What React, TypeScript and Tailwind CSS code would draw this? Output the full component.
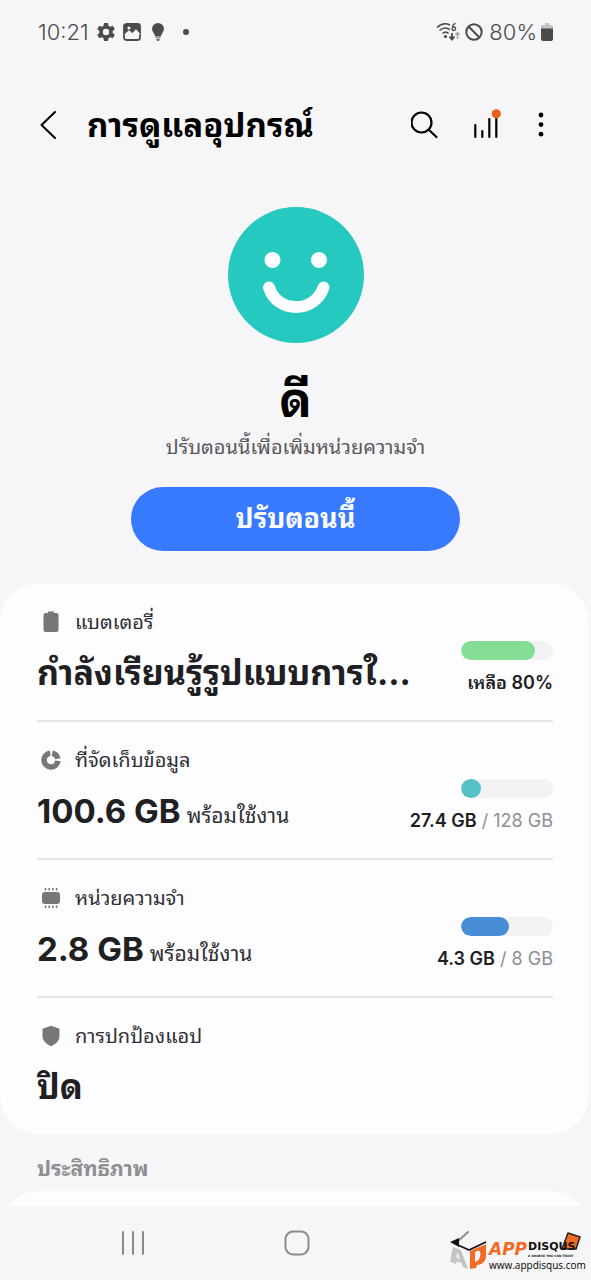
import type { ReactNode } from "react";

type RowProps = {
  icon: ReactNode;
  label: string;
  value: string;
  suffix?: string;
  meter?: { percent: number; color: string; name: string };
  detail?: ReactNode;
  last?: boolean;
};

function DeviceRow({ icon, label, value, suffix, meter, detail, last }: RowProps) {
  return (
    <li className={last ? "h-[136px]" : "h-[138px] border-b-2 border-[#e6e6e8]"}>
      <a href="#" className="flex h-full items-start justify-between">
        <div className="min-w-0 flex-1 pt-[22px]">
          <div className="flex h-8 items-center">
            <span className="flex w-[38px] items-center">{icon}</span>
            <span className="text-[20px] leading-8 text-[#303034]">{label}</span>
          </div>
          <p
            className={
              suffix
                ? "text-[33px] leading-[70px] font-bold whitespace-nowrap text-[#202022]"
                : "text-[34px] leading-[70px] font-bold whitespace-nowrap text-[#202022]"
            }
          >
            {value}
            {suffix && <span className="ml-1.5 text-[21px] font-normal text-[#303034]">{suffix}</span>}
          </p>
        </div>
        {meter && (
          <div className="flex shrink-0 flex-col items-end gap-2 pt-[57px]">
            <div
              role="meter"
              aria-label={meter.name}
              aria-valuenow={meter.percent}
              aria-valuemin={0}
              aria-valuemax={100}
              className="h-[19px] w-[92px] overflow-hidden rounded-full bg-[#f2f2f4]"
            >
              <div className={`h-full rounded-full ${meter.color}`} style={{ width: `${meter.percent}%` }} />
            </div>
            <p className="text-[18px] leading-[30px] whitespace-nowrap text-[#8e8e91]">{detail}</p>
          </div>
        )}
      </a>
    </li>
  );
}

function StatusBar() {
  return (
    <div className="flex h-16 items-center justify-between px-[38px] text-[22px] font-light text-[#4b4b4d]">
      <div className="flex items-center gap-2">
        <span>10:21</span>
        <svg width="18" height="18" viewBox="0 0 18 18" fill="currentColor">
          <path fillRule="evenodd" d="M7 0h4l.5 2.7 1.7 1 2.6-1 2 3.5-2.1 1.7v2.2l2.1 1.7-2 3.5-2.6-1-1.7 1L11 18H7l-.5-2.7-1.7-1-2.6 1-2-3.5 2.1-1.7V7.900L.2 6.200l2-3.500 2.600 1 1.700-1zM9 5.800a3.200 3.200 0 1 0 0 6.400a3.200 3.200 0 0 0 0-6.400z" />
        </svg>
        <svg width="18" height="18" viewBox="0 0 18 18" fill="none" stroke="currentColor">
          <rect x="1" y="1" width="16" height="16" rx="2.500" strokeWidth="1.800" />
          <path d="M1 1h16v10l-4-4.500-3.500 4L6 7.500 1 12z" fill="currentColor" stroke="none" />
          <path d="M2 12l4-3.700 3.500 3 3.500-4 3.500 4.200" stroke="#f6f6f8" strokeWidth="1.500" />
          <circle cx="6" cy="5" r="1.600" fill="#f6f6f8" stroke="none" />
        </svg>
        <svg width="18" height="18" viewBox="0 0 18 18" fill="currentColor">
          <path d="M9 0a6 6 0 0 0-6 6c0 2.600 2.400 4.200 3.200 7.400h5.600C12.600 10.200 15 8.600 15 6a6 6 0 0 0-6-6z" />
          <path d="M6.500 14.200h5v1.100h-5zM7 16h4l-1 2H8z" opacity=".8" />
        </svg>
        <span className="ml-2 size-1.5 rounded-full bg-[#4b4b4d]" />
      </div>
      <div className="flex items-center gap-1">
        <svg width="25" height="20" viewBox="0 0 25 20" fill="none" stroke="currentColor" strokeWidth="1.600">
          <path d="M1 5.500C5 1.500 10 1 14 3M3.500 8.500c3.500-3 7.500-3 10.500-.8M6.500 11.500c2-1.600 4.500-1.600 6 0" />
          <circle cx="9.500" cy="14.500" r=".8" fill="currentColor" />
          <path d="M19.500 1.500c-2 0-3 2-2.800 4.200M19.500 6a1.800 1.800 0 1 1-2.900-.6 1.800 1.800 0 0 1 2.900.6z" strokeWidth="1.400" />
          <path d="M16 11v6M13.500 14.500l2.500 3 2.500-3" strokeWidth="1.800" />
          <path d="M21.500 17v-6M19.500 13l2-2.500 2 2.500" stroke="#a4a4a7" strokeWidth="1.400" />
        </svg>
        <svg width="18" height="18" viewBox="0 0 18 18" fill="none" stroke="currentColor" strokeWidth="2">
          <circle cx="9" cy="9" r="7.700" />
          <path d="M3.500 3.500l11 11" />
        </svg>
        <span className="ml-0.5">80%</span>
        <svg width="12" height="18" viewBox="0 0 12 18">
          <path d="M4 0h4v2h2a2 2 0 0 1 2 2v3H0V4a2 2 0 0 1 2-2h2z" fill="#c2c2c5" />
          <path d="M0 5.500h12V16a2 2 0 0 1-2 2H2a2 2 0 0 1-2-2z" fill="#4b4b4d" />
        </svg>
      </div>
    </div>
  );
}

function Watermark() {
  return (
    <div className="pointer-events-none absolute right-1 bottom-[9px] flex h-[40px] w-[138px]">
      <svg className="absolute inset-0" width="138" height="40" viewBox="0 0 138 40">
        <path d="M4 16l8 3 7 19-5-2-1.500-4-5-1.500L7 33l-6-2.500zM8 21l-.5 6 3.500 1z" fill="#c4c4c6" fillRule="evenodd" />
        <path d="M21 20l9-4c5-1.500 7-3 7-3v12c0 6-5 9-9 9l-1 3-6 1zM26 21v10c6-1 7-11 3-11.500z" fill="#f36a25" fillRule="evenodd" />
        <path d="M1 11l9-4v9z" fill="#111" />
        <path d="M9 14l11 5 17-8" fill="none" stroke="#111" strokeWidth="1.600" />
        <path d="M119 2l12 4-4 12h-14z" fill="#f36a25" stroke="#222" strokeWidth="1.500" strokeLinejoin="round" />
      </svg>
      <div className="relative ml-10 flex flex-1 flex-col">
        <div className="flex h-7 items-end gap-px font-['DejaVu_Sans',sans-serif] font-bold">
          <span className="text-[17px] leading-5 text-[#f36a25] italic">APP</span>
          <span className="flex flex-col">
            <span className="text-[11px] leading-[12px] text-[#111]">DISQUS</span>
            <span className="text-[3px] leading-[6px] whitespace-nowrap text-[#111]">A SOURCE YOU CAN TRUST</span>
          </span>
        </div>
        <span className="font-['Open_Sans',sans-serif] text-[10px] leading-3 font-medium text-black">www.appdisqus.com</span>
      </div>
    </div>
  );
}

export default function App() {
  return (
    <div className="relative flex min-h-screen flex-col overflow-hidden bg-[#f6f6f8] font-[Inter,'Noto_Sans_Thai_Looped','Noto_Sans_Thai','Noto_Sans',sans-serif]">
      <StatusBar />
      <header className="flex h-[122px] items-center pr-[38px] pl-9">
        <button aria-label="ย้อนกลับ" className="flex w-[51px]">
          <svg width="24" height="30" viewBox="0 0 24 30" fill="none" stroke="#000" strokeWidth="2" strokeLinecap="round" strokeLinejoin="round">
            <path d="M19 2L5.500 15 19 28" />
          </svg>
        </button>
        <h1 className="flex-1 text-[33px] leading-[48px] font-bold text-black">การดูแลอุปกรณ์</h1>
        <div className="flex items-center gap-7">
          <button aria-label="ค้นหา">
            <svg width="28" height="28" viewBox="0 0 28 28" fill="none" stroke="#000" strokeWidth="2.200" strokeLinecap="round">
              <circle cx="10.500" cy="11.500" r="10" />
              <path d="M18 19l7.500 7" />
            </svg>
          </button>
          <button aria-label="สถิติ">
            <svg width="34" height="32" viewBox="0 0 34 32" fill="none" stroke="#000" strokeWidth="2.200" strokeLinecap="round">
              <path d="M8.300 16v12M15.300 22v6M22.300 10v18M29.300 8v20" />
              <circle cx="29.300" cy="4.800" r="4.600" fill="#ed5c1c" stroke="none" />
            </svg>
          </button>
          <button aria-label="ตัวเลือกเพิ่มเติม">
            <svg width="24" height="28" viewBox="0 0 24 28">
              <circle cx="12" cy="4" r="2.400" />
              <circle cx="12" cy="13.600" r="2.400" />
              <circle cx="12" cy="23.200" r="2.400" />
            </svg>
          </button>
        </div>
      </header>

      <main className="flex flex-1 flex-col">
        <section className="flex flex-col items-center pt-[21px] pb-[33px]">
          <svg width="136" height="136" viewBox="0 0 136 136">
            <circle cx="68" cy="68" r="68" fill="#25c9bf" />
            <circle cx="44.500" cy="53" r="8" fill="#fafcff" />
            <circle cx="91" cy="53" r="8" fill="#fafcff" />
            <path d="M41 80.500c8 26 46 26 54.500 0" fill="none" stroke="#fafcff" strokeWidth="12" strokeLinecap="round" />
          </svg>
          <h2 className="mt-[26px] text-[48px] leading-[62px] font-bold text-black">ดี</h2>
          <p className="text-[20px] leading-8 text-[#58585b]">ปรับตอนนี้เพื่อเพิ่มหน่วยความจำ</p>
          <button className="mt-6 h-[64px] w-[329px] rounded-full bg-[#387aff] text-[27px] font-bold text-[#fafcff]">
            ปรับตอนนี้
          </button>
        </section>

        <ul className="mr-0.5 rounded-[38px] bg-[#fdfdff] pr-9 pl-[37px]">
          <DeviceRow
            icon={
              <svg width="28" height="22" viewBox="0 0 28 22" fill="#77777a">
                <path d="M11 .500h6V2h2.500a2 2 0 0 1 2 2v15a2 2 0 0 1-2 2h-11a2 2 0 0 1-2-2V4a2 2 0 0 1 2-2H11z" />
              </svg>
            }
            label="แบตเตอรี่"
            value="กำลังเรียนรู้รูปแบบการใ..."
            meter={{ percent: 80, color: "bg-[#83dd92]", name: "แบตเตอรี่" }}
            detail={<span className="font-semibold text-[#202022]">เหลือ 80%</span>}
          />
          <DeviceRow
            icon={
              <svg width="28" height="22" viewBox="0 0 28 22" fill="none" stroke="#77777a" strokeWidth="5.500">
                <path d="M13.200 4.200a6.900 6.900 0 1 0 7.600 7.700" />
                <path d="M15.200 4.200a6.900 6.900 0 0 1 5.600 5.600" />
              </svg>
            }
            label="ที่จัดเก็บข้อมูล"
            value="100.6 GB"
            suffix="พร้อมใช้งาน"
            meter={{ percent: 22, color: "bg-[#53c1c6]", name: "ที่จัดเก็บข้อมูล" }}
            detail={<><span className="font-semibold text-[#202022]">27.4 GB</span> / 128 GB</>}
          />
          <DeviceRow
            icon={
              <svg width="28" height="22" viewBox="0 0 28 22" fill="#77777a">
                <rect x="5" y="5" width="18" height="12" rx="3" />
                <path d="M8.500 3.500V1M12.200 3.500V1M15.900 3.500V1M19.600 3.500V1M8.500 18.500V21M12.200 18.500V21M15.900 18.500V21M19.600 18.500V21" stroke="#77777a" strokeWidth="1.500" />
              </svg>
            }
            label="หน่วยความจำ"
            value="2.8 GB"
            suffix="พร้อมใช้งาน"
            meter={{ percent: 52, color: "bg-[#488dd6]", name: "หน่วยความจำ" }}
            detail={<><span className="font-semibold text-[#202022]">4.3 GB</span> / 8 GB</>}
          />
          <DeviceRow
            icon={
              <svg width="28" height="22" viewBox="0 0 28 22" fill="#77777a">
                <path d="M14 .800l8.500 3V11c0 4.500-3.500 8-8.500 10.200C9 19 5.500 15.500 5.500 11V3.800z" />
              </svg>
            }
            label="การปกป้องแอป"
            value="ปิด"
            last
          />
        </ul>

        <h3 className="pt-[21px] pr-9 pb-2 pl-[37px] text-[21px] leading-7 font-bold text-[#8e8e91]">ประสิทธิภาพ</h3>
        <div className="h-[15px] overflow-hidden">
          <div className="mr-0.5 h-20 rounded-[38px] bg-[#fdfdff]" />
        </div>
      </main>

      <nav className="grid h-[74px] grid-cols-[1fr_64px_1fr] items-center pl-0.5">
        <button aria-label="แอปล่าสุด" className="flex justify-center">
          <svg width="26" height="26" viewBox="0 0 26 26" stroke="#8b8b8d" strokeWidth="2" strokeLinecap="round">
            <path d="M3 2v22M13 2v22M23 2v22" />
          </svg>
        </button>
        <button aria-label="หน้าหลัก" className="flex justify-center">
          <svg width="26" height="26" viewBox="0 0 26 26" fill="none" stroke="#8b8b8d" strokeWidth="2">
            <rect x="1.500" y="1.500" width="23" height="23" rx="7.500" />
          </svg>
        </button>
        <button aria-label="กลับ" className="flex justify-center">
          <svg width="26" height="26" viewBox="0 0 26 26" fill="none" stroke="#8b8b8d" strokeWidth="2" strokeLinecap="round">
            <path d="M21 2L9 13" />
          </svg>
        </button>
      </nav>
      <Watermark />
    </div>
  );
}
